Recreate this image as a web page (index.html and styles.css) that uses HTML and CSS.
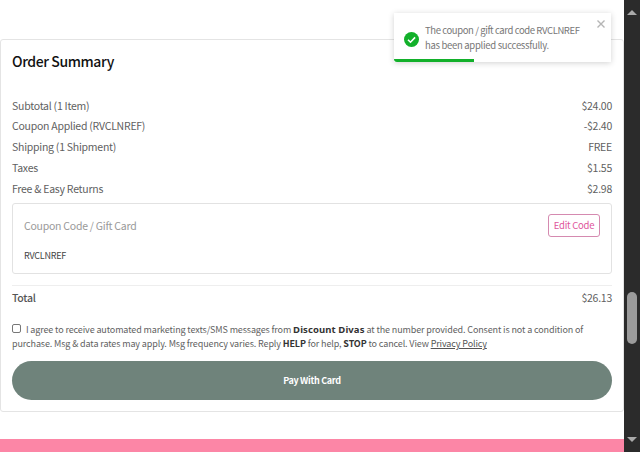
FILE: index.html
```html
<!DOCTYPE html>
<html lang="en">

<head>
    <meta charset="UTF-8">
    <title>Order Summary</title>
    <link rel="stylesheet" href="styles.css">
</head>

<body>
    <div class="page">
        <div class="content">
            <div class="summary">
                <h2 class="summary_title">Order Summary</h2>
                <div class="rows">
                    <div class="row"><span>Subtotal (1 Item)</span><span>$24.00</span></div>
                    <div class="row"><span>Coupon Applied (RVCLNREF)</span><span>-$2.40</span></div>
                    <div class="row"><span>Shipping (1 Shipment)</span><span>FREE</span></div>
                    <div class="row"><span>Taxes</span><span>$1.55</span></div>
                    <div class="row"><span>Free &amp; Easy Returns</span><span>$2.98</span></div>
                </div>
                <div class="coupon">
                    <div class="coupon_head">
                        <span class="coupon_label">Coupon Code / Gift Card</span>
                        <button class="edit_btn">Edit Code</button>
                    </div>
                    <div class="coupon_code">RVCLNREF</div>
                </div>
                <div class="total"><span class="total_label">Total</span><span>$26.13</span></div>
                <div class="consent">
                    <span class="check"></span>
                    I agree to receive automated marketing texts/SMS messages from <b class="brand">Discount Divas</b> at the number provided. Consent is not a condition of purchase. Msg &amp; data rates may apply. Msg frequency varies. Reply <b>HELP</b> for help, <b>STOP</b> to cancel. View <a href="#">Privacy Policy</a>
                </div>
                <button class="pay_btn">Pay With Card</button>
            </div>
            <div class="footer"></div>
        </div>
        <div class="scrollbar">
            <span class="arrow_up"></span>
            <span class="thumb"></span>
            <span class="arrow_down"></span>
        </div>
    </div>
    <!-- toast -->
    <div class="toast">
        <svg class="toast_icon" width="15" height="15" viewBox="0 0 15 15">
            <circle cx="7.5" cy="7.5" r="7.5" fill="#12b02a" />
            <path d="M4 7.7l2.5 2.5 4.6-4.8" fill="none" stroke="#fff" stroke-width="1.6" />
        </svg>
        <p class="toast_text">The coupon / gift card code RVCLNREF<br>has been applied successfully.</p>
        <svg class="toast_close" width="8" height="8" viewBox="0 0 8 8">
            <path d="M.5.5l7 7M7.5.5l-7 7" stroke="#b5b5b5" stroke-width="1.4" />
        </svg>
        <div class="toast_bar"></div>
    </div>
</body>

</html>
```

FILE: styles.css
```css
* {
    box-sizing: border-box;
}

body {
    margin: 0;
    height: 452px;
    overflow: hidden;
    background-color: white;
    font-family: "Noto Sans CJK TC", "Noto Sans", sans-serif;
    font-size: 10.5px;
    letter-spacing: -0.25px;
    color: #5f5f5f;
}

.page {
    display: flex;
    height: 452px;
}

.content {
    flex: 1;
    padding-top: 39px;
    min-width: 0;
}

.summary {
    height: 373px;
    padding: 0 11px;
    border: 1px solid #e4e4e4;
    border-radius: 3px;
}

.summary_title {
    margin: 0;
    padding-top: 10px;
    height: 56.5px;
    font-size: 14px;
    letter-spacing: -0.4px;
    line-height: 23px;
    font-weight: 500;
    color: #111;
}

.rows {
    display: flex;
    flex-direction: column;
    gap: 3px;
}

.row,
.total {
    display: flex;
    justify-content: space-between;
    line-height: 17.8px;
}

.coupon {
    margin-top: 5.5px;
    height: 71px;
    padding: 10px 11px 0;
    border: 1px solid #e2e2e2;
    border-radius: 3px;
}

.coupon_head {
    display: flex;
    justify-content: space-between;
    align-items: center;
}

.coupon_label {
    color: #999;
}

.edit_btn {
    width: 52px;
    height: 23px;
    padding: 0;
    background-color: white;
    border: 1px solid #d58ab0;
    border-radius: 3px;
    font-family: inherit;
    font-size: 9.5px;
    letter-spacing: -0.25px;
    color: #e0559c;
}

.coupon_code {
    margin-top: 11px;
    font-size: 9px;
    line-height: 16px;
    color: #444;
}

.total {
    margin-top: 11px;
    padding-top: 3px;
    border-top: 1px solid #eee;
    height: 35px;
}

.total_label {
    font-weight: 500;
    color: #555;
}

.consent {
    font-size: 9px;
    letter-spacing: -0.12px;
    line-height: 14px;
    margin-top: 3px;
}

.consent b {
    font-weight: 700;
    color: #333;
}

.consent .brand {
    font-family: "Noto Sans", sans-serif;
    font-size: 9.5px;
    letter-spacing: 0.1px;
}

.consent a {
    color: #555;
}

.check {
    display: inline-block;
    width: 9px;
    height: 9px;
    margin: 0 3px 0 0;
    border: 1px solid #777;
    border-radius: 2px;
}

.pay_btn {
    display: block;
    width: 100%;
    height: 39px;
    margin-top: 10px;
    background-color: #6f837b;
    border: none;
    border-radius: 20px;
    font-family: inherit;
    font-size: 9px;
    letter-spacing: -0.3px;
    font-weight: 700;
    color: white;
}

.footer {
    margin-top: 27px;
    height: 13px;
    background-color: #fc86a6;
}

.scrollbar {
    position: relative;
    width: 16px;
    background-color: #2b2b2b;
}

.thumb {
    position: absolute;
    left: 3px;
    top: 292px;
    width: 10px;
    height: 52px;
    border-radius: 5px;
    background-color: #9b9b9b;
}

.arrow_up,
.arrow_down {
    position: absolute;
    left: 3px;
    width: 0;
    height: 0;
    border-left: 5px solid transparent;
    border-right: 5px solid transparent;
}

.arrow_up {
    top: 10px;
    border-bottom: 5px solid #aaa;
}

.arrow_down {
    bottom: 10px;
    border-top: 5px solid #aaa;
}

.toast {
    position: absolute;
    left: 394px;
    top: 13px;
    width: 217px;
    height: 49px;
    display: flex;
    align-items: center;
    background-color: white;
    box-shadow: 0 1px 6px rgba(0, 0, 0, 0.18);
}

.toast_icon {
    flex: none;
    margin: 4px 6px 0 10px;
}

.toast_text {
    margin: 0;
    white-space: nowrap;
    font-size: 9.5px;
    letter-spacing: -0.3px;
    line-height: 15px;
    color: #777;
}

.toast_text::first-line {
    letter-spacing: -0.4px;
}

.toast_close {
    position: absolute;
    right: 6px;
    top: 7px;
}

.toast_bar {
    position: absolute;
    left: 0;
    bottom: 0;
    width: 80px;
    height: 3px;
    background-color: #12b02a;
    border-radius: 0 0 0 3px;
}
```
